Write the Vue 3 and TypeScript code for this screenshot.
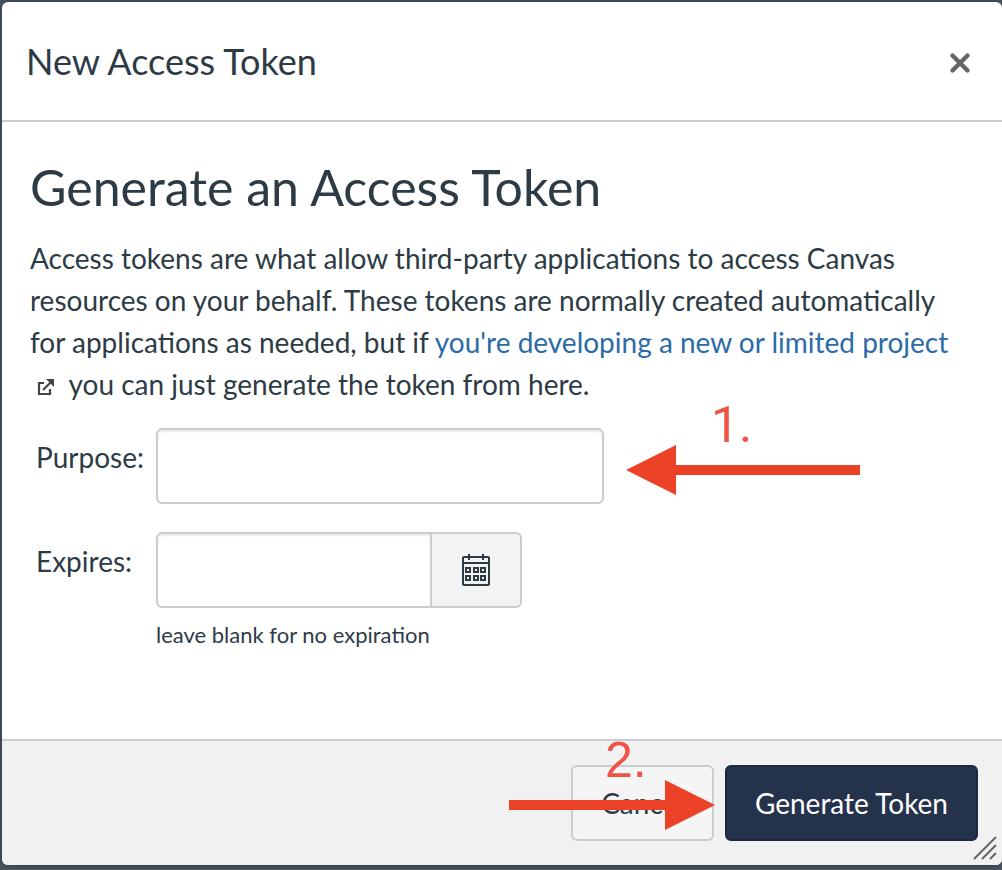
<script setup lang="ts">
import { ref } from 'vue'

const purpose = ref('')
const expires = ref('')

const dateColumns: number[] = [5, 13, 20]
const dateRows: number[] = [14, 22]
</script>

<template>
  <div class="backdrop">
    <section class="dialog" role="dialog" aria-labelledby="dialog-title">
      <header class="dialog-header">
        <h1 id="dialog-title">New Access Token</h1>
        <button class="close" type="button" aria-label="Close">
          <svg width="24" height="24" viewBox="0 0 24 24">
            <path d="M4.5 4.5 19.500 19.500M19.500 4.500 4.500 19.500" stroke="#666" stroke-width="4.400" stroke-linecap="round" />
          </svg>
        </button>
      </header>

      <form class="dialog-form" @submit.prevent>
        <div class="dialog-body">
          <h2>Generate an Access Token</h2>
          <p class="intro">
            Access tokens are what allow third-party applications to access Canvas resources on your
            behalf. These tokens are normally created automatically for applications as needed, but if
            <a href="#">you're developing a new or limited project
              <svg class="external" width="18" height="18" viewBox="0 0 18 18" fill="none" stroke="#444">
                <path d="M7 5H2V16H13V11" stroke-width="2.200" />
                <path d="M6 12 14 4" stroke-width="2.200" />
                <path d="M9 1H17V9Z" fill="#444" stroke="none" />
              </svg></a>
            you can just generate the token from here.
          </p>

          <div class="row">
            <label for="purpose">Purpose:</label>
            <div class="field purpose-field">
              <input id="purpose" v-model="purpose" type="text" />
              <div class="note note-purpose">
                <span class="step">1.</span>
                <svg class="arrow" width="234" height="50" viewBox="0 0 234 50" fill="#eb4126">
                  <path d="M0 25 50 0V20H234V30H50V50Z" />
                </svg>
              </div>
            </div>
          </div>

          <div class="row">
            <label for="expires">Expires:</label>
            <div class="field">
              <div class="date-group">
                <input id="expires" v-model="expires" type="text" aria-describedby="expires-hint" />
                <button class="calendar" type="button" aria-label="Choose a date">
                  <svg width="30" height="34" viewBox="0 0 30 34" fill="none" stroke="#2d3b45" stroke-width="2">
                    <rect x="2" y="4" width="26" height="28" rx="1" />
                    <path d="M2 10H28M8 1V7M22 1V7" />
                    <template v-for="y in dateRows" :key="y">
                      <rect v-for="x in dateColumns" :key="x" :x="x" :y="y + 1" width="4" height="4" />
                    </template>
                  </svg>
                </button>
              </div>
              <div id="expires-hint" class="hint">leave blank for no expiration</div>
            </div>
          </div>
        </div>

        <footer class="dialog-footer">
          <button class="btn" type="button">Cancel</button>
          <button class="btn btn-primary" type="submit">Generate Token</button>
          <div class="note note-submit">
            <span class="step">2.</span>
            <svg class="arrow" width="206" height="50" viewBox="0 0 206 50" fill="#eb4126">
              <path d="M206 25 156 0V20H0V30H156V50Z" />
            </svg>
          </div>
          <svg class="grip" width="24" height="24" viewBox="0 0 24 24" stroke="#666" stroke-width="2">
            <path d="M1 23 23 1M9 23 23 9M17 23 23 17" />
          </svg>
        </footer>
      </form>
    </section>
  </div>
</template>

<style>
body {
  margin: 0;
}
</style>

<style scoped>
* {
  box-sizing: border-box;
}

.backdrop {
  display: flex;
  min-height: 100vh;
  padding: 2px 0 5px 2px;
  background: #4b5660;
  color: #2d3b45;
  font: 28px/42px Lato, 'Liberation Sans', sans-serif;
}

.dialog {
  display: flex;
  flex: 1;
  flex-direction: column;
  overflow: hidden;
  border-radius: 6px;
  background: #fff;
  box-shadow: 0 0 6px rgba(0, 0, 0, 0.4);
}

.dialog-header {
  display: flex;
  align-items: center;
  justify-content: space-between;
  height: 120px;
  padding: 0 30px 0 24px;
  border-bottom: 2px solid #c7cdd1;
}

h1,
h2 {
  margin: 0;
  font-weight: 400;
}

h1 {
  font-size: 36px;
  line-height: 48px;
}

h2 {
  font-size: 50px;
  line-height: 76px;
}

button,
input {
  margin: 0;
  color: inherit;
  font: inherit;
}

.close {
  display: flex;
  padding: 4px 0 0;
  border: 0;
  background: none;
}

.dialog-form {
  display: flex;
  flex: 1;
  flex-direction: column;
}

.dialog-body {
  flex: 1;
  padding: 27px 28px;
}

.intro {
  margin: 12px 0 23px;
}

a {
  color: #2b6ba6;
  text-decoration: none;
}

.external {
  margin: 0 7px;
  vertical-align: -1px;
}

.row {
  display: flex;
  align-items: flex-start;
  margin-bottom: 28px;
}

label {
  width: 126px;
  padding: 8px 0 0 6px;
}

.field {
  position: relative;
}

input {
  display: block;
  width: 448px;
  height: 76px;
  padding: 0 16px;
  border: 2px solid #c7cdd1;
  border-radius: 6px;
  background: #fff;
  box-shadow: inset 0 2px 2px rgba(0, 0, 0, 0.08);
}

.purpose-field input {
  border-color: #ccc;
}

.date-group {
  display: flex;
}

.date-group input {
  width: 276px;
  border-radius: 6px 0 0 6px;
}

.calendar {
  display: flex;
  align-items: center;
  justify-content: center;
  width: 92px;
  margin-left: -2px;
  border: 2px solid #c7cdd1;
  border-radius: 0 6px 6px 0;
  background: #f3f3f3;
}

.hint {
  margin-top: 7px;
  font-size: 22px;
  line-height: 40px;
}

.dialog-footer {
  position: relative;
  display: flex;
  justify-content: flex-end;
  gap: 11px;
  padding: 24px;
  border-top: 2px solid #c7cdd1;
  background: #f1f1f1;
}

.btn {
  height: 76px;
  padding: 0 28px;
  border: 2px solid #c7cdd1;
  border-radius: 6px;
  background: #f5f5f5;
}

.btn-primary {
  border-color: #1c2840;
  background: #24324b;
  color: #fff;
}

/* Numbered pointers laid over the form */
.note {
  position: absolute;
  pointer-events: none;
}

.note-purpose {
  top: -23px;
  left: 470px;
}

.note-submit {
  right: 287px;
  bottom: 35px;
}

.step {
  display: block;
  padding-left: 96px;
  color: #ee5546;
  font: 50px/40px 'Liberation Sans', sans-serif;
}

.note-purpose .step {
  padding-left: 85px;
  font-family: Roboto, 'Liberation Sans', sans-serif;
}

.arrow {
  display: block;
}

.grip {
  position: absolute;
  right: 5px;
  bottom: 5px;
}
</style>
